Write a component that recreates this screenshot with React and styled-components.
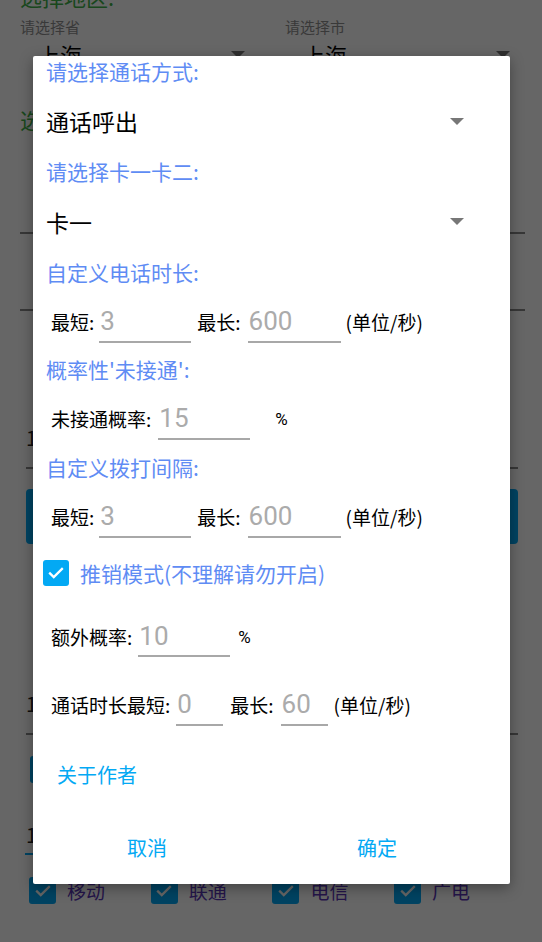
import React from "react";
import styled, { createGlobalStyle } from "styled-components";

const Global = createGlobalStyle`
  html, body { margin: 0; padding: 0; background: #fff; }
  body { font-family: "Noto Sans CJK SC", "Noto Sans", sans-serif; }
`;

const LABEL_BLUE = "#5f8cf4";
const ACCENT = "#03a9f4";

const Page = styled.div`
  position: relative;
  width: 542px;
  height: 942px;
  overflow: hidden;
  background: #fff;
  font-family: "Noto Sans CJK SC", "Noto Sans", sans-serif;
`;

/* ---------- background screen ---------- */
const Screen = styled.div`
  display: flex;
  flex-direction: column;
  padding: 0 24px 0 20px;
`;

const GreenTitle = styled.div`
  color: #3fb24a;
  font-size: 22px;
  line-height: 26px;
  margin-top: ${(p) => p.$mt}px;
`;

const ProvinceGrid = styled.div`
  display: grid;
  grid-template-columns: 265px 1fr;
  margin-top: 8px;
`;

const ProvinceCell = styled.div`
  display: flex;
  flex-direction: column;
`;

const SmallLabel = styled.div`
  color: #909090;
  font-size: 15px;
  line-height: 20px;
`;

const SpinnerValue = styled.div`
  display: flex;
  align-items: center;
  justify-content: space-between;
  height: 34px;
  padding: 0 ${(p) => p.$pr}px 0 18px;
  font-size: 22px;
  color: #000;
`;

const Arrow = styled.span`
  width: 0;
  height: 0;
  border-left: 7px solid transparent;
  border-right: 7px solid transparent;
  border-top: 7px solid #777;
`;

const Rule = styled.div`
  height: 2px;
  background: ${(p) => p.$color || "#8a8a8a"};
  margin: ${(p) => p.$mt}px ${(p) => p.$mr || 0}px 0 ${(p) => p.$ml || 0}px;
`;

const BgText = styled.div`
  font-size: 20px;
  line-height: 24px;
  color: #222;
  padding-left: 6px;
  margin-top: ${(p) => p.$mt}px;
`;

const BgButton = styled.div`
  height: 55px;
  margin: 20px 0 0 6px;
  border-radius: 4px;
  background: ${ACCENT};
`;

const BgCheck = styled.div`
  width: 27px;
  height: 27px;
  border-radius: 3px;
  background: ${ACCENT};
  display: flex;
  align-items: center;
  justify-content: center;
  flex: none;
`;

const BgCheckWrap = styled.div`
  margin: ${(p) => p.$mt}px 0 0 10px;
`;

const CarrierGrid = styled.div`
  display: grid;
  grid-template-columns: repeat(4, 121.7px);
  margin: 22px 0 0 9px;
`;

const Carrier = styled.div`
  display: flex;
  align-items: center;
  gap: 11px;
  font-size: 19px;
  color: #5b36b8;
`;

const CheckMark = ({ size = 18 }) => (
  <svg width={size} height={size} viewBox="0 0 24 24" fill="none">
    <path d="M4 12.5l5 5L20 6.5" stroke="#fff" strokeWidth="3" strokeLinecap="square" />
  </svg>
);

/* ---------- overlay + dialog ---------- */
const Scrim = styled.div`
  position: absolute;
  inset: 0;
  background: rgba(0, 0, 0, 0.6);
`;

const Dialog = styled.div`
  position: absolute;
  top: 56px;
  left: 33px;
  width: 477px;
  height: 828px;
  background: #fff;
  border-radius: 2px;
  box-shadow: 0 4px 14px rgba(0, 0, 0, 0.35);
  display: flex;
  flex-direction: column;
`;

const SectionLabel = styled.div`
  color: ${LABEL_BLUE};
  font-size: 21px;
  line-height: 30px;
  height: 30px;
  padding-left: 13px;
`;

const Spinner = styled.div`
  display: flex;
  align-items: center;
  justify-content: space-between;
  height: ${(p) => p.$h}px;
  padding: 0 46px 0 13px;
  font-size: 23px;
  color: #000;
`;

const FieldRow = styled.div`
  display: flex;
  align-items: flex-start;
  padding: ${(p) => p.$pt}px 0 0 18px;
  height: ${(p) => p.$h}px;
  box-sizing: border-box;
`;

const FieldText = styled.span`
  font-size: 19px;
  line-height: 30px;
  color: #000;
  white-space: nowrap;
  margin-left: ${(p) => p.$ml || 0}px;
`;

const Percent = styled.span`
  font-family: Roboto, "Noto Sans", sans-serif;
  font-size: 17px;
  line-height: 30px;
  color: #000;
  margin-left: ${(p) => p.$ml}px;
`;

const Field = styled.span`
  display: block;
  box-sizing: border-box;
  width: ${(p) => p.$w}px;
  height: ${(p) => p.$h || 36}px;
  margin-left: ${(p) => p.$ml}px;
  padding-left: 1px;
  border-bottom: 2px solid #a8a8a8;
  font-family: Roboto, "Noto Sans", sans-serif;
  font-size: 26px;
  line-height: 28px;
  color: #ababab;
`;

const CheckRow = styled.label`
  display: flex;
  align-items: center;
  gap: 11px;
  height: 26px;
  padding: 10px 0 0 10px;
  color: ${LABEL_BLUE};
  font-size: 21px;
`;

const CheckBox = styled.span`
  width: 26px;
  height: 26px;
  border-radius: 3px;
  background: ${ACCENT};
  display: flex;
  align-items: center;
  justify-content: center;
  flex: none;
`;

const AboutLink = styled.div`
  color: ${ACCENT};
  font-size: 20px;
  line-height: 30px;
  padding-left: 24px;
  margin-top: 34px;
`;

const ButtonBar = styled.div`
  display: grid;
  grid-template-columns: 1fr 1fr;
  width: 460px;
  margin: 43px 0 0 -1px;
`;

const DialogButton = styled.div`
  text-align: center;
  color: ${ACCENT};
  font-size: 20px;
  line-height: 30px;
`;

export default function App() {
  return (
    <Page>
      <Global />
      <Screen>
        <GreenTitle $mt={-17}>选择地区:</GreenTitle>
        <ProvinceGrid>
          <ProvinceCell>
            <SmallLabel>请选择省</SmallLabel>
            <SpinnerValue $pr={40}>
              上海
              <Arrow />
            </SpinnerValue>
          </ProvinceCell>
          <ProvinceCell>
            <SmallLabel>请选择市</SmallLabel>
            <SpinnerValue $pr={8}>
              上海
              <Arrow />
            </SpinnerValue>
          </ProvinceCell>
        </ProvinceGrid>
        <GreenTitle $mt={35}>选择号段:</GreenTitle>
        <Rule $mt={100} $mr={-7} />
        <Rule $mt={75} $mr={-7} />
        <BgText $mt={115}>1</BgText>
        <Rule $mt={17} $ml={6} $mr={0} />
        <BgButton />
        <BgText $mt={148}>1</BgText>
        <Rule $mt={17} $ml={6} $mr={0} />
        <BgCheckWrap $mt={21}>
          <BgCheck>
            <CheckMark />
          </BgCheck>
        </BgCheckWrap>
        <BgText $mt={40}>1</BgText>
        <Rule $mt={6} $ml={5} $mr={19} $color={ACCENT} />
        <CarrierGrid>
          <Carrier>
            <BgCheck><CheckMark /></BgCheck>移动
          </Carrier>
          <Carrier>
            <BgCheck><CheckMark /></BgCheck>联通
          </Carrier>
          <Carrier>
            <BgCheck><CheckMark /></BgCheck>电信
          </Carrier>
          <Carrier>
            <BgCheck><CheckMark /></BgCheck>广电
          </Carrier>
        </CarrierGrid>
      </Screen>

      <Scrim />

      <Dialog>
        <SectionLabel>请选择通话方式:</SectionLabel>
        <Spinner $h={70}>
          通话呼出
          <Arrow />
        </Spinner>
        <SectionLabel>请选择卡一卡二:</SectionLabel>
        <Spinner $h={71}>
          卡一
          <Arrow />
        </Spinner>
        <SectionLabel>自定义电话时长:</SectionLabel>
        <FieldRow $pt={20} $h={67}>
          <FieldText>最短:</FieldText>
          <Field $w={92} $ml={5}>3</Field>
          <FieldText $ml={6}>最长:</FieldText>
          <Field $w={93} $ml={7}>600</Field>
          <FieldText $ml={5}>(单位/秒)</FieldText>
        </FieldRow>
        <SectionLabel>概率性'未接通':</SectionLabel>
        <FieldRow $pt={20} $h={68}>
          <FieldText>未接通概率:</FieldText>
          <Field $w={92} $ml={7}>15</Field>
          <Percent $ml={25}>%</Percent>
        </FieldRow>
        <SectionLabel>自定义拨打间隔:</SectionLabel>
        <FieldRow $pt={20} $h={68}>
          <FieldText>最短:</FieldText>
          <Field $w={92} $ml={5}>3</Field>
          <FieldText $ml={6}>最长:</FieldText>
          <Field $w={93} $ml={7}>600</Field>
          <FieldText $ml={5}>(单位/秒)</FieldText>
        </FieldRow>
        <CheckRow>
          <CheckBox>
            <CheckMark />
          </CheckBox>
          推销模式(不理解请勿开启)
        </CheckRow>
        <FieldRow $pt={36} $h={72}>
          <FieldText>额外概率:</FieldText>
          <Field $w={92} $ml={6} $h={35}>10</Field>
          <Percent $ml={8}>%</Percent>
        </FieldRow>
        <FieldRow $pt={32} $h={68}>
          <FieldText>通话时长最短:</FieldText>
          <Field $w={47} $ml={6}>0</Field>
          <FieldText $ml={7}>最长:</FieldText>
          <Field $w={47} $ml={7}>60</Field>
          <FieldText $ml={6}>(单位/秒)</FieldText>
        </FieldRow>
        <AboutLink>关于作者</AboutLink>
        <ButtonBar>
          <DialogButton>取消</DialogButton>
          <DialogButton>确定</DialogButton>
        </ButtonBar>
      </Dialog>
    </Page>
  );
}
